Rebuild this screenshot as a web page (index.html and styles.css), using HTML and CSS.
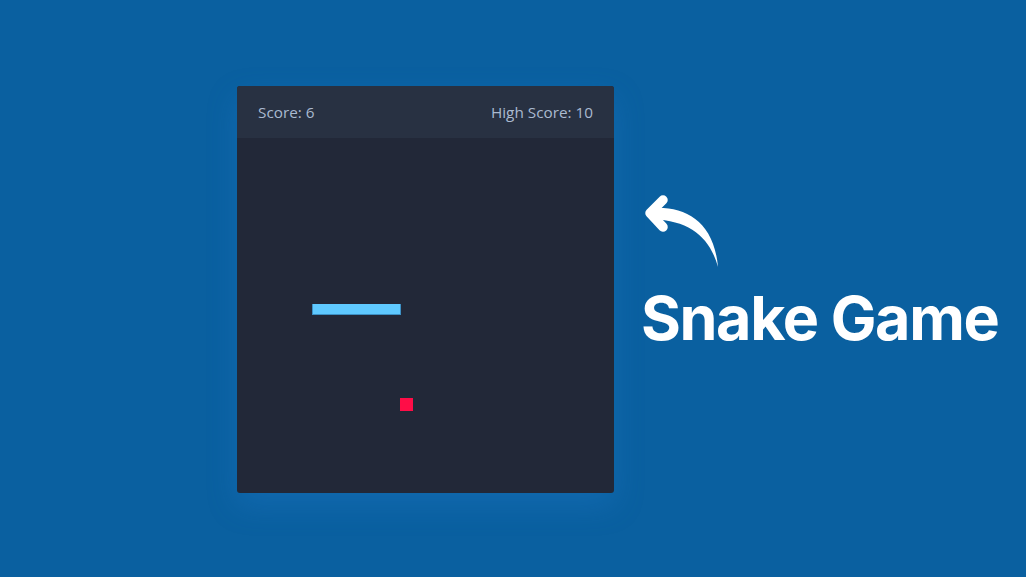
FILE: index.html
```html
<!DOCTYPE html>
<html lang="en">
<head>
<meta charset="utf-8">
<title>Snake Game</title>
<link rel="stylesheet" href="styles.css">
</head>
<body>
<div class="scene">
  <div class="card">
    <div class="card-header">
      <span>Score: 6</span>
      <span>High Score: 10</span>
    </div>
    <div class="board">
      <div class="snake"></div>
      <div class="food"></div>
    </div>
  </div>
  <div class="side">
    <svg class="arrow" width="90" height="85" viewBox="0 0 90 85" aria-hidden="true">
      <path d="M24 10 L11 23 L24 37" fill="none" stroke="#fff" stroke-width="9.5" stroke-linecap="round" stroke-linejoin="round"/>
      <path d="M14 18 C47 16 75 32 79 77 C71 48 52 31 14 29 Z" fill="#fff"/>
    </svg>
    <h1 class="title">Snake Game</h1>
  </div>
</div>
</body>
</html>
```
FILE: styles.css
```css
html, body {
  margin: 0;
  padding: 0;
}
body {
  width: 1026px;
  height: 577px;
  background: #0a60a0;
  overflow: hidden;
  font-family: "Open Sans", "Noto Sans", sans-serif;
}
.scene {
  display: flex;
  align-items: flex-start;
  padding: 86px 0 0 237px;
  gap: 27px;
}
.card {
  width: 377px;
  height: 407px;
  border-radius: 3px;
  overflow: hidden;
  background: #222838;
  display: flex;
  flex-direction: column;
  box-shadow: 0 12px 30px rgba(40, 130, 220, 0.25);
}
.card-header {
  height: 52px;
  background: #283142;
  display: flex;
  align-items: center;
  justify-content: space-between;
  padding: 0 21px;
  color: #aabad0;
  font-size: 15.3px;
  flex-shrink: 0;
}
.board {
  position: relative;
  flex: 1;
}
.snake {
  position: absolute;
  left: 75px;
  top: 166px;
  width: 89px;
  height: 11px;
  box-sizing: border-box;
  background: #5fc9ff;
  border-right: 1px solid #3d90c4;
  border-bottom: 1px solid #3d90c4;
  border-left: 1px solid #3d90c4;
}
.food {
  position: absolute;
  left: 163px;
  top: 260px;
  width: 13px;
  height: 13px;
  background: #ff0d47;
}
.side {
  display: flex;
  flex-direction: column;
  margin-top: 104px;
}
.arrow {
  display: block;
  margin-left: -2px;
}
.title {
  margin: 13px 0 0 0;
  font-family: "Inter", "Liberation Sans", sans-serif;
  font-weight: 700;
  font-size: 61px;
  line-height: 1;
  color: #ffffff;
  letter-spacing: -1.4px;
  white-space: nowrap;
}
```
